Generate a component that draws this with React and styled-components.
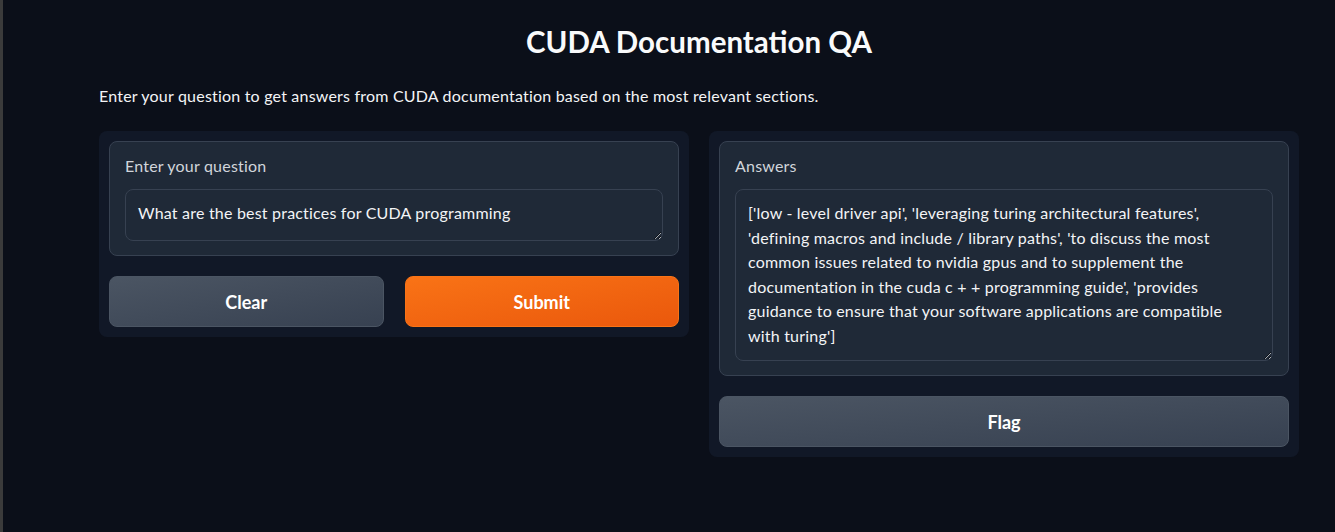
import React from 'react';
import styled, { createGlobalStyle } from 'styled-components';

const GlobalStyle = createGlobalStyle`
  html, body {
    margin: 0;
    padding: 0;
    background: #0b0f19;
    height: 100%;
  }
  body {
    font-family: Lato, "Noto Sans", sans-serif;
    color: #f3f4f6;
    border-left: 3px solid #3b3b3b;
    box-sizing: border-box;
    min-height: 532px;
  }
`;

const Page = styled.div`
  width: 1200px;
  margin-left: 96px;
  padding-top: 22px;
`;

const Title = styled.h1`
  margin: 0;
  text-align: center;
  font-size: 29.5px;
  font-weight: 700;
  line-height: 40px;
  color: #f9fafb;
`;

const Description = styled.p`
  margin: 22px 0 0;
  font-size: 16px;
  line-height: 24px;
  letter-spacing: 0.2px;
  color: #f3f4f6;
`;

const Columns = styled.div`
  display: flex;
  gap: 20px;
  align-items: flex-start;
  margin-top: 23px;
`;

const Panel = styled.div`
  flex: 1;
  background: #111827;
  border-radius: 8px;
  padding: 10px;
  display: flex;
  flex-direction: column;
  gap: 20px;
`;

const Block = styled.div`
  background: #1f2937;
  border: 1px solid #374151;
  border-radius: 8px;
  padding: 12px 15px 14px;
`;

const Label = styled.div`
  font-size: 16px;
  line-height: 24px;
  letter-spacing: 0.2px;
  color: #d1d5db;
  margin-bottom: 11px;
`;

const TextArea = styled.textarea`
  display: block;
  width: 100%;
  box-sizing: border-box;
  background: #1f2937;
  border: 1px solid #374151;
  border-radius: 8px;
  color: #f3f4f6;
  font-family: inherit;
  font-size: 16px;
  letter-spacing: 0.2px;
  line-height: 24.6px;
  padding: 11px 30px 12px 12px;
  height: ${p => p.$h}px;
  resize: vertical;
  outline: none;
  overflow: hidden;
`;

const ButtonRow = styled.div`
  display: flex;
  gap: 21px;
`;

const Button = styled.button`
  flex: 1 1 0;
  height: 51px;
  border-radius: 8px;
  font-family: inherit;
  font-size: 18px;
  font-weight: 700;
  color: #ffffff;
  cursor: pointer;
  border: 1px solid ${p => (p.$primary ? '#f97316' : '#4b5563')};
  background: ${p =>
    p.$primary
      ? 'linear-gradient(to bottom right, #f97316, #ea580c)'
      : 'linear-gradient(to bottom right, #4b5563, #374151)'};
`;

const FlagButton = styled(Button)`
  flex: none;
  width: 100%;
`;

export default function App() {
  return (
    <>
      <GlobalStyle />
      <Page>
        <Title>CUDA Documentation QA</Title>
        <Description>
          Enter your question to get answers from CUDA documentation based on the most relevant sections.
        </Description>
        <Columns>
          <Panel>
            <Block>
              <Label>Enter your question</Label>
              <TextArea $h={52} rows={1} defaultValue="What are the best practices for CUDA programming" />
            </Block>
            <ButtonRow>
              <Button>Clear</Button>
              <Button $primary>Submit</Button>
            </ButtonRow>
          </Panel>
          <Panel>
            <Block>
              <Label>Answers</Label>
              <TextArea
                $h={172}
                readOnly
                defaultValue="['low - level driver api', 'leveraging turing architectural features', 'defining macros and include / library paths', 'to discuss the most common issues related to nvidia gpus and to supplement the documentation in the cuda c + + programming guide', 'provides guidance to ensure that your software applications are compatible with turing']"
              />
            </Block>
            <FlagButton>Flag</FlagButton>
          </Panel>
        </Columns>
      </Page>
    </>
  );
}
